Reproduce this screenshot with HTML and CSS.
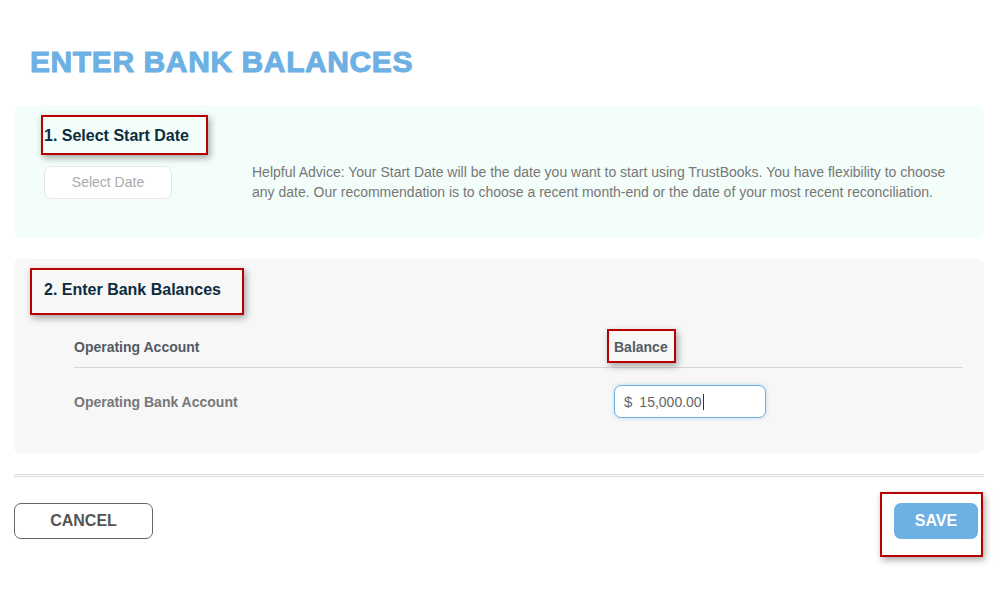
FILE: index.html
```html
<!DOCTYPE html>
<html lang="en">
<head>
<meta charset="UTF-8">
<meta name="viewport" content="width=device-width, initial-scale=1.0">
<title>Enter Bank Balances - TrustBooks</title>
<link rel="stylesheet" href="styles.css">
</head>
<body>
<div class="page">
<h1 class="page-title">ENTER BANK BALANCES</h1>

<div class="panel panel-date">
<h2 class="step"><span class="marked mark-step1">1. Select Start Date</span></h2>
<div class="date-row">
<button class="date-btn">Select Date</button>
<p class="advice">Helpful Advice: Your Start Date will be the date you want to start using TrustBooks. You have flexibility to choose any date. Our recommendation is to choose a recent month-end or the date of your most recent reconciliation.</p>
</div>
</div>

<div class="panel panel-balances">
<h2 class="step"><span class="marked mark-step2">2. Enter Bank Balances</span></h2>
<div class="balance-table">
<div class="bt-head">
<div>Operating Account</div>
<div><span class="marked mark-balance">Balance</span></div>
</div>
<div class="bt-row">
<div class="bt-name">Operating Bank Account</div>
<div>
<label class="money">
<span class="money-sign">$</span>
<input type="text" value="15,000.00">
<span class="caret"></span>
</label>
</div>
</div>
</div>
</div>

<div class="divider"></div>

<div class="actions">
<button class="btn btn-cancel">CANCEL</button>
<span class="marked mark-save"><button class="btn btn-save">SAVE</button></span>
</div>
</div>
</body>
</html>
```

FILE: styles.css
```css
body {
font-family: "Liberation Sans", Arial, sans-serif;
margin: 0;
padding: 0;
background: #fff;
}
.page {
padding: 0 15px 60px 14px;
}
.page-title {
margin: 0;
padding: 45px 0 0 16px;
height: 49px;
font-size: 30px;
line-height: 34px;
font-weight: bold;
color: #6cb0e4;
-webkit-text-stroke: 1px #6cb0e4;
letter-spacing: 0.6px;
}
.panel {
border-radius: 6px;
padding: 20px 30px 36px 30px;
}
.panel-date {
margin-top: 12px;
background: #f3fdf9;
}
.panel-balances {
margin-top: 21px;
background: #f7f7f7;
padding: 21px 21px 35px 30px;
}
.step {
margin: 0;
font-size: 16px;
line-height: 20px;
font-weight: bold;
color: #0d2c40;
}
.date-row {
display: flex;
align-items: center;
margin-top: 16px;
}
.date-btn {
width: 128px;
height: 33px;
margin-right: 80px;
background: #fff;
border: 1px solid #e6e6e6;
border-radius: 7px;
font-family: inherit;
font-size: 14px;
color: #aaa;
}
.advice {
flex: 1;
margin: 0;
font-size: 14px;
line-height: 20px;
color: #777;
}
.balance-table {
margin: 38px 0 0 30px;
}
.bt-head,
.bt-row {
display: grid;
grid-template-columns: 540px 1fr;
align-items: center;
}
.bt-head {
padding-bottom: 11px;
border-bottom: 1px solid #d6d6d6;
font-size: 14px;
line-height: 18px;
font-weight: bold;
color: #535b64;
}
.bt-row {
padding-top: 17px;
font-size: 14px;
font-weight: bold;
color: #777;
}
.money {
position: relative;
display: flex;
align-items: center;
width: 150px;
height: 31px;
background: #fff;
border: 1px solid #6cb0e4;
border-radius: 7px;
box-shadow: 0 0 4px rgba(108, 176, 228, 0.45);
}
.money-sign {
margin-left: 9px;
font-size: 15px;
font-weight: normal;
color: #666;
}
.money input {
width: 90px;
margin-left: 7px;
padding: 0;
border: 0;
outline: none;
background: transparent;
font-family: inherit;
font-size: 14px;
color: #666;
}
.caret {
position: absolute;
left: 88px;
top: 8px;
width: 1px;
height: 16px;
background: #333;
}
.divider {
margin-top: 21px;
height: 1px;
border-top: 1px solid #dcdcdc;
border-bottom: 1px solid #dcdcdc;
}
.actions {
display: flex;
justify-content: space-between;
align-items: center;
margin-top: 26px;
padding-right: 6px;
}
.btn {
height: 36px;
border-radius: 7px;
font-family: inherit;
font-size: 16px;
font-weight: bold;
}
.btn-cancel {
width: 139px;
background: #fff;
border: 1px solid #666;
color: #555;
}
.btn-save {
display: block;
width: 84px;
background: #6cb0e4;
border: 0;
color: #fff;
}

/* red annotation boxes */
.marked {
position: relative;
display: inline-block;
}
.marked::after {
content: "";
position: absolute;
border: 2px solid #b80000;
box-shadow: 2px 3px 7px rgba(0, 0, 0, 0.35);
pointer-events: none;
}
.mark-step1::after {
top: -11px;
left: -3px;
right: -19px;
bottom: -9px;
}
.mark-step2::after {
top: -12px;
left: -14px;
right: -23px;
bottom: -15px;
}
.mark-balance::after {
top: -9px;
left: -7px;
right: -8px;
bottom: -7px;
}
.mark-save::after {
top: -11px;
left: -14px;
right: -5px;
bottom: -18px;
}
```
